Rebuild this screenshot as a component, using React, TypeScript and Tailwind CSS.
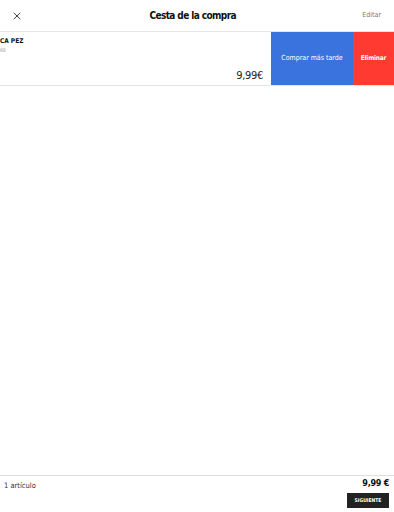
import { X } from 'lucide-react';

export default function App() {
  return (
    <div className="flex h-[512px] w-[394px] flex-col bg-white font-['DejaVu_Sans',sans-serif] font-stretch-condensed text-[#111]">
      <header className="flex h-[32px] items-center justify-between border-b border-[#e6e6e6] pl-[11px] pr-[13px]">
        <X className="h-[12px] w-[12px]" strokeWidth={1.6} />
        <h1 className="text-[10px] font-bold tracking-[-0.6px]">Cesta de la compra</h1>
        <button className="text-[7px] text-[#777]">Editar</button>
      </header>

      <div className="flex h-[54px] overflow-hidden border-b border-[#e3e3e3]">
        <div className="flex flex-1 flex-col pr-[8px]">
          <p className="mt-[6px] text-[6.5px] font-bold leading-none">CA PEZ</p>
          <p className="mt-[3px] text-[5px] leading-none text-[#999]">68</p>
          <p className="mt-auto mb-[4px] self-end text-[11px] leading-none tracking-[-0.3px] text-[#222]">9,99€</p>
        </div>
        <button className="flex w-[82px] items-center justify-center bg-[#3b73de] text-[7px] text-white">
          Comprar más tarde
        </button>
        <button className="flex w-[41px] items-center justify-center bg-[#ff3a30] text-[6.5px] font-bold tracking-[-0.2px] text-white">
          Eliminar
        </button>
      </div>

      <div className="flex-1" />

      <footer className="flex h-[37px] justify-between border-t border-[#dedede] px-[4px]">
        <p className="mt-[4px] text-[7.5px] text-[#333]">1 artículo</p>
        <div className="flex flex-col items-end pt-[3px] pr-[1px]">
          <p className="text-[9px] font-bold leading-none tracking-[-0.3px]">9,99 €</p>
          <button className="mt-[5px] h-[15px] w-[42px] bg-[#222] text-[5px] font-bold text-white">
            SIGUIENTE
          </button>
        </div>
      </footer>
    </div>
  );
}
